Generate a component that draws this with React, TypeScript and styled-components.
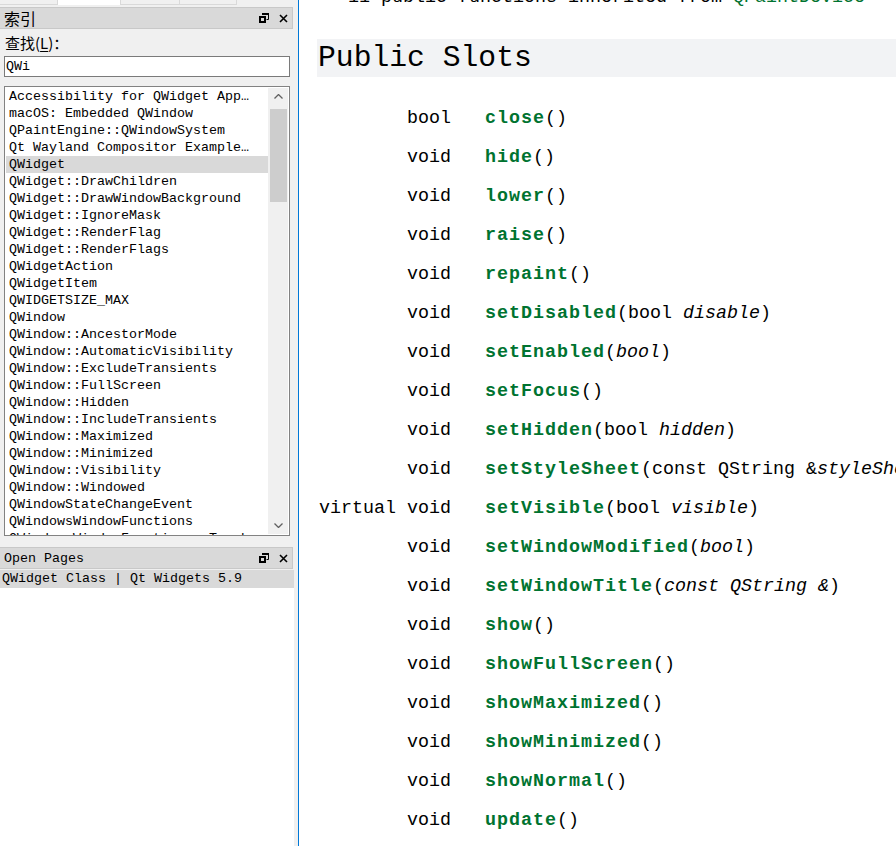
import React from 'react';
import styled, { createGlobalStyle } from 'styled-components';

const GlobalStyle = createGlobalStyle`
  html, body {
    margin: 0;
    padding: 0;
    background: #ffffff;
    overflow: hidden;
  }
`;

const MONO = `'Liberation Mono', 'Noto Sans CJK SC', monospace`;
const CJK = `'Noto Sans CJK SC', 'Liberation Sans', sans-serif`;

const indexItems = [
  'Accessibility for QWidget App…',
  'macOS: Embedded QWindow',
  'QPaintEngine::QWindowSystem',
  'Qt Wayland Compositor Example…',
  'QWidget',
  'QWidget::DrawChildren',
  'QWidget::DrawWindowBackground',
  'QWidget::IgnoreMask',
  'QWidget::RenderFlag',
  'QWidget::RenderFlags',
  'QWidgetAction',
  'QWidgetItem',
  'QWIDGETSIZE_MAX',
  'QWindow',
  'QWindow::AncestorMode',
  'QWindow::AutomaticVisibility',
  'QWindow::ExcludeTransients',
  'QWindow::FullScreen',
  'QWindow::Hidden',
  'QWindow::IncludeTransients',
  'QWindow::Maximized',
  'QWindow::Minimized',
  'QWindow::Visibility',
  'QWindow::Windowed',
  'QWindowStateChangeEvent',
  'QWindowsWindowFunctions',
  'QWindowsWindowFunctions::Touch',
];

type Param = { text: string; italic?: boolean };

type Slot = {
  type: string;
  name: string;
  params?: Array<Param>;
};

const slots: Array<Slot> = [
  { type: 'bool', name: 'close' },
  { type: 'void', name: 'hide' },
  { type: 'void', name: 'lower' },
  { type: 'void', name: 'raise' },
  { type: 'void', name: 'repaint' },
  { type: 'void', name: 'setDisabled', params: [{ text: 'bool ' }, { text: 'disable', italic: true }] },
  { type: 'void', name: 'setEnabled', params: [{ text: 'bool', italic: true }] },
  { type: 'void', name: 'setFocus' },
  { type: 'void', name: 'setHidden', params: [{ text: 'bool ' }, { text: 'hidden', italic: true }] },
  { type: 'void', name: 'setStyleSheet', params: [{ text: 'const QString &' }, { text: 'styleSheet', italic: true }] },
  { type: 'virtual void', name: 'setVisible', params: [{ text: 'bool ' }, { text: 'visible', italic: true }] },
  { type: 'void', name: 'setWindowModified', params: [{ text: 'bool', italic: true }] },
  { type: 'void', name: 'setWindowTitle', params: [{ text: 'const QString &', italic: true }] },
  { type: 'void', name: 'show' },
  { type: 'void', name: 'showFullScreen' },
  { type: 'void', name: 'showMaximized' },
  { type: 'void', name: 'showMinimized' },
  { type: 'void', name: 'showNormal' },
  { type: 'void', name: 'update' },
];

const tabs = [
  { label: '内容', width: 58 },
  { label: '索引', width: 63, active: true },
  { label: '书签', width: 59 },
  { label: '搜索', width: 57 },
];

function FloatIcon() {
  return (
    <svg width='10' height='10' viewBox='0 0 10 10'>
      <path d='M3.5 0.5 H9.5 V6.5 H7.5' fill='none' stroke='#000' strokeWidth='1' />
      <rect x='3' y='0' width='7' height='2' fill='#000' />
      <rect x='1' y='4' width='5' height='5' fill='none' stroke='#000' strokeWidth='2' />
    </svg>
  );
}

function CloseIcon() {
  return (
    <svg width='9' height='9' viewBox='0 0 9 9'>
      <path d='M1 1 L8 8 M8 1 L1 8' stroke='#000' strokeWidth='1.6' />
    </svg>
  );
}

function Chevron({ down }: { down?: boolean }) {
  return (
    <svg width='9' height='5' viewBox='0 0 9 5'>
      <path d={down ? 'M0.5 0.5 L4.5 4.5 L8.5 0.5' : 'M0.5 4.5 L4.5 0.5 L8.5 4.5'} fill='none' stroke='#606060' strokeWidth='1.3' />
    </svg>
  );
}

function App() {
  return (
    <Page>
      <GlobalStyle />
      <Sidebar>
        <TabStrip>
          {tabs.map((tab) => (
            <Tab key={tab.label} $width={tab.width} $active={tab.active}>
              {tab.label}
            </Tab>
          ))}
        </TabStrip>

        <DockTitle $cjk>
          <span>索引</span>
          <DockButtons>
            <FloatIcon />
            <CloseIcon />
          </DockButtons>
        </DockTitle>

        <FindLabel>
          查找(<u>L</u>)：
        </FindLabel>
        <SearchInput>QWi</SearchInput>

        <ListBox>
          <ListRows>
            {indexItems.map((item, i) => (
              <ListRow key={item} $selected={i === 4}>
                {item}
              </ListRow>
            ))}
          </ListRows>
          <ScrollBar>
            <ScrollArrow>
              <Chevron />
            </ScrollArrow>
            <ScrollTrack>
              <ScrollThumb />
            </ScrollTrack>
            <ScrollArrow>
              <Chevron down />
            </ScrollArrow>
          </ScrollBar>
        </ListBox>

        <DockTitle $spaced>
          <span>Open Pages</span>
          <DockButtons>
            <FloatIcon />
            <CloseIcon />
          </DockButtons>
        </DockTitle>
        <OpenPages>
          <OpenPageRow>QWidget Class | Qt Widgets 5.9</OpenPageRow>
        </OpenPages>
      </Sidebar>

      <Content>
        <InheritedLine>
          11 public functions inherited from <Link>QPaintDevice</Link>
        </InheritedLine>
        <Heading>Public Slots</Heading>
        <SlotTable>
          {slots.map((slot) => (
            <React.Fragment key={slot.name}>
              <TypeCell>{slot.type}</TypeCell>
              <SignatureCell>
                <FuncName>{slot.name}</FuncName>(
                {slot.params?.map((p) => (p.italic ? <Arg key={p.text}>{p.text}</Arg> : <span key={p.text}>{p.text}</span>))})
              </SignatureCell>
            </React.Fragment>
          ))}
        </SlotTable>
      </Content>
    </Page>
  );
}

export default App;

const Page = styled.div`
  display: flex;
  width: 896px;
  height: 846px;
  overflow: hidden;
  background: #ffffff;
`;

const Sidebar = styled.aside`
  width: 298px;
  flex-shrink: 0;
  display: flex;
  flex-direction: column;
  background: #f0f0f0;
  border-right: 1px solid #0078d7;
  box-sizing: content-box;
`;

const TabStrip = styled.div`
  display: flex;
  height: 5px;
  overflow: hidden;
  align-items: flex-end;
  margin-bottom: 2px;
`;

const Tab = styled.div<{ $width: number; $active?: boolean }>`
  flex-shrink: 0;
  width: ${(p) => p.$width}px;
  height: 22px;
  box-sizing: border-box;
  text-align: center;
  line-height: 12px;
  font-family: ${CJK};
  font-size: 13px;
  color: #000;
  background: ${(p) => (p.$active ? '#ffffff' : '#f0f0f0')};
  border-right: 1px solid #d9d9d9;
  border-bottom: ${(p) => (p.$active ? 'none' : '1px solid #d9d9d9')};
`;

const DockTitle = styled.div<{ $cjk?: boolean; $spaced?: boolean }>`
  display: flex;
  align-items: center;
  justify-content: space-between;
  height: 22px;
  margin: ${(p) => (p.$spaced ? '11px' : '0')} 5px 0 0;
  padding: 0 4px 0 4px;
  box-sizing: border-box;
  background: #d9d9d9;
  border: 1px solid #c8c8c8;
  border-left: none;
  font-family: ${(p) => (p.$cjk ? CJK : MONO)};
  font-size: ${(p) => (p.$cjk ? '16px' : '13.33px')};
  color: #000;
`;

const DockButtons = styled.div`
  display: flex;
  align-items: center;
  gap: 10px;
`;

const FindLabel = styled.div`
  margin: 4px 0 0 5px;
  height: 20px;
  line-height: 20px;
  font-family: ${CJK};
  font-size: 15px;
  color: #000;

  & > u {
    text-underline-offset: 2px;
  }
`;

const SearchInput = styled.div`
  margin: 3px 8px 0 4px;
  height: 21px;
  box-sizing: border-box;
  border: 1px solid #7a7a7a;
  background: #ffffff;
  padding-left: 1px;
  line-height: 19px;
  font-family: ${MONO};
  font-size: 13.33px;
  color: #000;
`;

const ListBox = styled.div`
  display: flex;
  margin: 9px 8px 0 4px;
  height: 450px;
  flex-shrink: 0;
  box-sizing: border-box;
  border: 1px solid #828282;
  background: #ffffff;
  overflow: hidden;
`;

const ListRows = styled.div`
  flex: 1;
  min-width: 0;
  padding: 1px 0 0 1px;
  overflow: hidden;
`;

const ListRow = styled.div<{ $selected?: boolean }>`
  height: 17px;
  line-height: 18px;
  padding-left: 3px;
  white-space: nowrap;
  overflow: hidden;
  font-family: ${MONO};
  font-size: 13.33px;
  color: #000;
  background: ${(p) => (p.$selected ? '#d9d9d9' : 'transparent')};
`;

const ScrollBar = styled.div`
  width: 19px;
  flex-shrink: 0;
  display: flex;
  flex-direction: column;
  background: #f0f0f0;
  border-left: 1px solid #f0f0f0;
  margin: 1px 1px 1px 0;
`;

const ScrollArrow = styled.div`
  height: 17px;
  display: flex;
  align-items: center;
  justify-content: center;
`;

const ScrollTrack = styled.div`
  flex: 1;
  padding-top: 4px;
`;

const ScrollThumb = styled.div`
  height: 93px;
  margin: 0 1px;
  background: #cdcdcd;
`;

const OpenPages = styled.div`
  flex: 1;
  margin-top: 1px;
  margin-right: 4px;
  background: #ffffff;
`;

const OpenPageRow = styled.div`
  height: 18px;
  line-height: 18px;
  padding-left: 2px;
  background: #d9d9d9;
  white-space: nowrap;
  font-family: ${MONO};
  font-size: 13.33px;
  color: #000;
`;

const Content = styled.main`
  flex: 1;
  min-width: 0;
  padding-left: 18px;
  background: #ffffff;
  overflow: hidden;
  font-family: ${MONO};
  font-size: 18.33px;
  color: #000;
`;

const InheritedLine = styled.div`
  margin-top: -13px;
  padding-left: 31px;
  height: 22px;
  line-height: 22px;
  white-space: nowrap;
`;

const Link = styled.span`
  color: #007330;
`;

const Heading = styled.h2`
  margin: 30px 0 0 0;
  height: 38px;
  line-height: 38px;
  padding-left: 1px;
  background: #f2f3f5;
  font-family: ${MONO};
  font-weight: normal;
  font-size: 29.7px;
  white-space: nowrap;
`;

const SlotTable = styled.div`
  display: grid;
  grid-template-columns: 134px auto;
  column-gap: 34px;
  margin-top: 22px;
  grid-auto-rows: 39px;
  line-height: 39px;
  white-space: nowrap;
`;

const TypeCell = styled.div`
  text-align: right;
`;

const SignatureCell = styled.div`
  overflow: visible;
`;

const FuncName = styled.span`
  color: #007330;
  font-weight: bold;
  letter-spacing: 1px;
`;

const Arg = styled.i`
  font-style: italic;
`;
